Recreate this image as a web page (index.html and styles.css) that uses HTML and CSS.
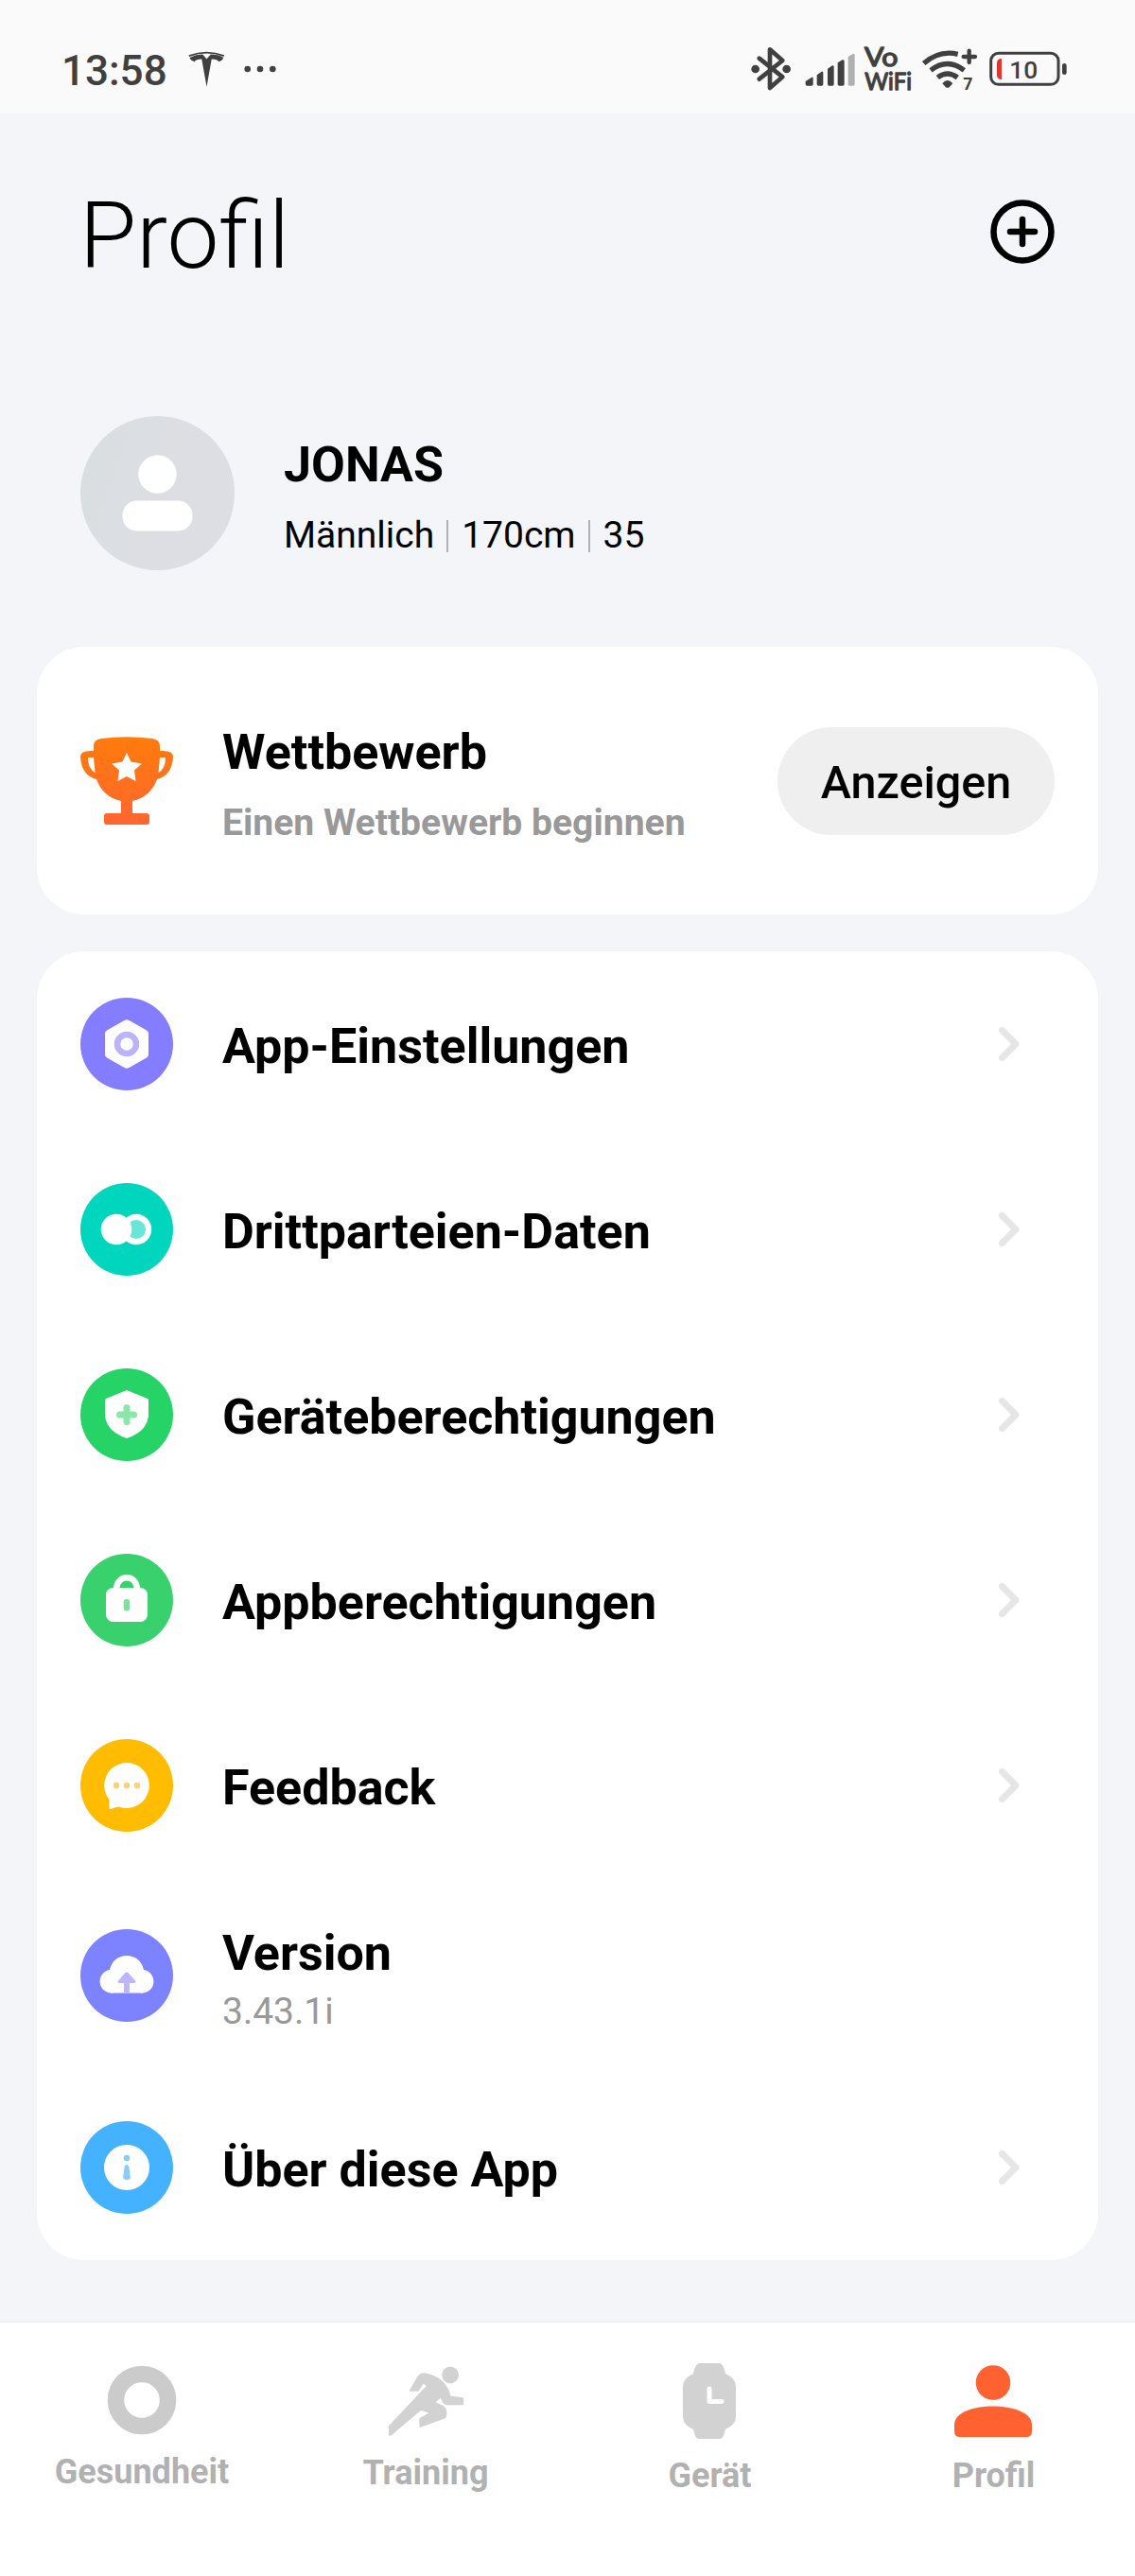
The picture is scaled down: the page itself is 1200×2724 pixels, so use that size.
FILE: index.html
```html
<!DOCTYPE html>
<html lang="de">
<head>
<meta charset="utf-8">
<title>Profil</title>
<link rel="stylesheet" href="styles.css">
</head>
<body>
<div class="status">
  <div class="status-left">
    <span class="time">13:58</span>
    <svg class="tesla" viewBox="476 70 118 116"><path d="M477 83Q535 61 592 83L590 88Q535 68 479 88Z"/><path d="M480 91Q500 81 522 81L535 96L548 81Q570 81 589 91Q586 101 574 104Q570 97 551 96L535 185L519 96Q500 97 496 104Q484 101 480 91Z"/></svg>
    <svg class="dots" viewBox="0 0 34 8"><circle cx="3.700" cy="4" r="3.300"/><circle cx="17" cy="4" r="3.300"/><circle cx="30.300" cy="4" r="3.300"/></svg>
  </div>
  <div class="status-right">
    <svg width="50" height="90" viewBox="40 0 150 270"><path class="line" stroke-width="14" d="M69 95L143 154L103 189V67L143 102L69 161"/><circle cx="57" cy="129" r="13"/><circle cx="156" cy="129" r="13"/></svg>
    <svg width="66.67" height="90" viewBox="190 0 200 270"><path d="M216 168L236 155Q240 154 240 159V177Q240 182 235 182H221Q216 182 216 177ZM252 148L267 137Q272 135 272 141V177Q272 182 267 182H257Q252 182 252 177ZM286 128L301 118Q306 116 306 122V177Q306 182 301 182H291Q286 182 286 177ZM318 109L333 100Q339 98 339 104V177Q339 182 334 182H323Q318 182 318 177Z"/><path class="faint" d="M351 90L366 81Q372 79 372 85V177Q372 182 367 182H356Q351 182 351 177Z"/></svg>
    <svg class="vowifi" width="60" height="90" viewBox="390 0 180 270"><text x="402" y="120" font-size="78" textLength="106" lengthAdjust="spacingAndGlyphs">Vo</text><text x="403" y="195" font-size="76" textLength="149" lengthAdjust="spacingAndGlyphs">WiFi</text></svg>
    <svg width="70" height="90" viewBox="570 0 210 270"><path class="arc" d="M590 111Q640 68 698 82M612 133Q665 92 718 133M634 156Q665 132 697 156"/><path d="M649 175Q665 155 682 175L671 187Q665 190 660 187Z"/><path class="line" stroke-width="13" d="M716 90H753M734 71V108"/><text class="seven" x="715" y="195">7</text></svg>
    <svg width="100" height="90" viewBox="780 0 300 270"><rect class="line" x="803" y="79" width="214" height="99" rx="24" stroke-width="9"/><path d="M1029 119Q1029 111 1036 111Q1043 111 1043 119V139Q1043 147 1036 147Q1029 147 1029 139Z"/><path class="low" d="M822 110Q822 96 837 96V162Q822 162 822 148Z"/><text class="level" x="862" y="159">10</text></svg>
  </div>
</div>

<header class="head">
  <h1>Profil</h1>
  <svg class="plus" viewBox="0 0 68 68"><circle cx="34" cy="34" r="30.500"/><path d="M34 21V47M21 34H47"/></svg>
</header>

<section class="user">
  <svg class="avatar" viewBox="0 0 163 163"><defs><linearGradient id="av" x1="0" y1=".3" x2=".6" y2=".5"><stop offset="0" stop-color="#d9dee1"/><stop offset="1" stop-color="#dddee3"/></linearGradient></defs><circle cx="81.500" cy="81.500" r="81.500" fill="url(#av)"/><circle cx="81.500" cy="61.500" r="20.300" fill="#fff"/><rect x="44.500" y="89.500" width="74" height="32" rx="15" fill="#fff"/></svg>
  <div class="user-text">
    <div class="name">JONAS</div>
    <div class="facts"><span>Männlich</span><i></i><span>170cm</span><i></i><span>35</span></div>
  </div>
</section>

<section class="card contest">
  <svg class="trophy" viewBox="0 0 98 93"><defs><linearGradient id="tr" x1="0" y1="0" x2="0" y2="1"><stop offset="0" stop-color="#ff7c0c"/><stop offset="1" stop-color="#ff6630"/></linearGradient></defs><path fill="url(#tr)" fill-rule="evenodd" d="M14 10Q14 3 22 2Q49-1.500 76 2Q84 3 84 10V15Q98 14 98 21Q97 41 81 45Q74 64 55 68V81H70Q73 81 73 84V90Q73 93 70 93H28Q25 93 25 90V84Q25 81 28 81H43V68Q24 64 17 45Q1 41 0 21Q0 14 14 15ZM14 22H8Q8 34 15.500 38ZM84 22L82.500 38Q90 34 90 22ZM49 17L44.500 26.500L33 28.500L41 35.500L39.500 47L49 42L58.500 47L57 35.500L65 28.500L53.500 26.500Z"/></svg>
  <div class="contest-text">
    <div class="label">Wettbewerb</div>
    <div class="sub">Einen Wettbewerb beginnen</div>
  </div>
  <button class="show">Anzeigen</button>
</section>

<section class="card list">
  <div class="row">
    <svg class="icon" viewBox="0 0 98 98"><circle cx="49" cy="49" r="49" fill="#857dff"/><path fill="#fff" d="M46.500 24Q49 22.500 51.500 24L70 34.500Q72 35.700 72 38V60Q72 62.300 70 63.500L51.500 74Q49 75.500 46.500 74L28 63.500Q26 62.300 26 60V38Q26 35.700 28 34.500Z"/><circle cx="49" cy="49" r="10" fill="none" stroke="#bdb3fa" stroke-width="6.500"/></svg>
    <span class="label">App-Einstellungen</span>
    <svg class="chev" viewBox="0 0 22 36"><path d="M3.500 3.500L18 18L3.500 32.500"/></svg>
  </div>
  <div class="row">
    <svg class="icon" viewBox="0 0 98 98"><circle cx="49" cy="49" r="49" fill="#00d6bd"/><circle cx="59" cy="49" r="16.200" fill="#fff"/><circle cx="59" cy="49" r="10" fill="#68e6d8"/><circle cx="38" cy="49" r="16.300" fill="#fff"/></svg>
    <span class="label">Drittparteien-Daten</span>
    <svg class="chev" viewBox="0 0 22 36"><path d="M3.500 3.500L18 18L3.500 32.500"/></svg>
  </div>
  <div class="row">
    <svg class="icon" viewBox="0 0 98 98"><circle cx="49" cy="49" r="49" fill="#26d366"/><path fill="#fff" d="M49 23L71 32Q72 32.500 72 34V48Q72 66 49 74Q26 66 26 48V34Q26 32.500 27 32Z"/><path class="cross" d="M41.500 49H56.500M49 41.500V56.500"/></svg>
    <span class="label">Geräteberechtigungen</span>
    <svg class="chev" viewBox="0 0 22 36"><path d="M3.500 3.500L18 18L3.500 32.500"/></svg>
  </div>
  <div class="row">
    <svg class="icon" viewBox="0 0 98 98"><circle cx="49" cy="49" r="49" fill="#39d16e"/><path fill="none" stroke="#fff" stroke-width="6.500" d="M38 38C38 21 60 21 60 38"/><rect x="27" y="36" width="44" height="36" rx="7.500" fill="#fff"/><rect x="45.700" y="48" width="6.600" height="12.500" rx="3.300" fill="#7ee09f"/></svg>
    <span class="label">Appberechtigungen</span>
    <svg class="chev" viewBox="0 0 22 36"><path d="M3.500 3.500L18 18L3.500 32.500"/></svg>
  </div>
  <div class="row">
    <svg class="icon" viewBox="0 0 98 98"><circle cx="49" cy="49" r="49" fill="#ffbc00"/><path fill="#fff" d="M49 25A24 24 0 1 1 40.500 71.500Q35 72.500 32 74Q30.500 74.500 30.500 73V64A24 24 0 0 1 49 25Z"/><g fill="#fdd077"><circle cx="38" cy="49" r="3.200"/><circle cx="49" cy="49" r="3.200"/><circle cx="60" cy="49" r="3.200"/></g></svg>
    <span class="label">Feedback</span>
    <svg class="chev" viewBox="0 0 22 36"><path d="M3.500 3.500L18 18L3.500 32.500"/></svg>
  </div>
  <div class="row version">
    <svg class="icon" viewBox="0 0 98 98"><circle cx="49" cy="49" r="49" fill="#7d82ff"/><path fill="#fff" d="M31 43C35 23 63 23 67 43A12.400 12.400 0 0 1 63 67.500H35A12.400 12.400 0 0 1 31 43Z"/><path fill="#bcb6fb" d="M47.500 46Q49 44.800 50.500 46L58 54.500Q59 57 57 57H52V67.500H46V57H41Q39 57 40 54.500Z"/></svg>
    <div class="version-text"><span class="label">Version</span><span class="num">3.43.1i</span></div>
  </div>
  <div class="row">
    <svg class="icon" viewBox="0 0 98 98"><circle cx="49" cy="49" r="49" fill="#45b2ff"/><circle cx="49" cy="49" r="24" fill="#fff"/><circle cx="49" cy="39" r="3.300" fill="#8acdf8"/><path fill="#8acdf8" d="M46.500 48.500Q47 46 49 46Q51 46 51.500 48.500L52.800 59Q53 62 49 62Q45 62 45.200 59Z"/></svg>
    <span class="label">Über diese App</span>
    <svg class="chev" viewBox="0 0 22 36"><path d="M3.500 3.500L18 18L3.500 32.500"/></svg>
  </div>
</section>

<nav class="tabs">
  <div class="tab t1"><svg width="84" height="84" viewBox="0 0 84 84"><circle cx="42" cy="42" r="27.500" fill="none" stroke="#cbcbcb" stroke-width="17.500"/></svg><span>Gesundheit</span></div>
  <div class="tab t2"><svg width="84" height="84" viewBox="0 0 84 84"><g transform="translate(3 5.500) scale(.3444 .3333) translate(-1106 -188)" fill="#d2d2d2"><ellipse cx="1295" cy="215" rx="26" ry="27"/><path d="M1170 263L1194 220Q1203 206 1220 209Q1282 222 1296 281L1332 286Q1336 287 1336 291V306Q1336 310 1332 310H1283Q1272 308 1265 288L1250 301L1275 313Q1287 322 1283 346Q1282 350 1277 353L1206 380Q1200 383 1200 376V352L1229 335L1205 327L1114 406Q1106 411 1106 403V376L1221 250L1213 242L1197 267H1173Q1169 267 1170 263Z"/></g></svg><span>Training</span></div>
  <div class="tab t3"><svg width="84" height="84" viewBox="0 0 84 84"><path fill="#d2d2d2" d="M31 2H53Q57 3 59 13Q70 18 70 27V59Q70 67 59 72Q57 82 53 82H31Q27 82 25 72Q14 67 14 59V27Q14 18 25 13Q27 3 31 2Z"/><path class="hand" d="M42 29V42.500H55"/></svg><span>Gerät</span></div>
  <div class="tab t4"><svg width="84" height="84" viewBox="0 0 84 84"><g fill="#ff6230"><circle cx="42" cy="22.500" r="18.300"/><path d="M1 67C1 41 83 41 83 67V74Q83 80 77 80H7Q1 80 1 74Z"/></g></svg><span>Profil</span></div>
</nav>
</body>
</html>
```
FILE: styles.css
```css
* { box-sizing: border-box; }
body {
  margin: 0;
  width: 1200px;
  height: 2724px;
  background: #f3f5f9;
  color: #000;
  font-family: Roboto, sans-serif;
  display: flex;
  flex-direction: column;
  overflow: hidden;
}
svg { display: block; flex: none; }

.status {
  height: 120px;
  background: #fafafa;
  color: #404040;
  fill: #404040;
  display: flex;
  justify-content: space-between;
  padding: 30px 60px 0 65px;
}
.status-left, .status-right { display: flex; height: 90px; }
.time { font-size: 44px; font-weight: 500; line-height: 90px; width: 134px; }
.tesla { width: 39px; height: 38px; margin-top: 24px; }
.dots { width: 34px; height: 8px; margin: 39px 0 0 20px; }
.line, .arc { fill: none; stroke: #404040; stroke-linecap: round; stroke-linejoin: round; }
.arc { stroke-width: 16px; stroke-linecap: butt; }
.faint { fill: #b0b0b0; }
.low { fill: #e3342f; }
.vowifi { font-family: Lato, sans-serif; font-weight: 400; stroke: #404040; stroke-width: 4px; stroke-linejoin: round; }
.seven { font-size: 53px; font-weight: 700; }
.level { font-size: 79px; font-weight: 500; }

.head {
  height: 254px;
  display: flex;
  justify-content: space-between;
  padding: 91px 85px 0 84px;
}
h1 { margin: 0; padding-top: 2px; font-weight: 300; font-size: 98px; line-height: 74px; }
.plus { width: 68px; height: 68px; }
.plus * { fill: none; stroke: #000; stroke-width: 6.5px; stroke-linecap: round; }

.user {
  height: 310px;
  padding: 66px 85px 0;
  display: flex;
  gap: 52px;
}
.avatar { width: 163px; height: 163px; }
.name { font-size: 52px; font-weight: 700; line-height: 60px; margin-top: 22px; }
.facts { display: flex; align-items: center; font-size: 39px; line-height: 46px; margin-top: 21px; }
.facts i { width: 2px; height: 34px; background: #b0b1b4; margin: 2px 14px 0 13px; }

.card {
  margin: 0 39px;
  background: #fff;
  border-radius: 50px;
}
.contest {
  height: 283px;
  padding: 0 46px;
  display: flex;
  align-items: center;
}
.trophy { width: 98px; height: 93px; }
.contest-text { flex: 1; margin-left: 52px; padding-top: 7px; }
.label { font-size: 52px; font-weight: 700; line-height: 60px; }
.sub { font-size: 39.1px; font-weight: 700; line-height: 46px; margin-top: 21px; color: #999; }
.show {
  width: 293px;
  height: 114px;
  border: 0;
  border-radius: 57px;
  background: #efefef;
  font: 500 48.5px/56px Roboto, sans-serif;
  color: #000;
  padding: 4px 0 0;
}
.list { margin-top: 39px; height: 1384px; }
.row {
  height: 196px;
  display: flex;
  align-items: center;
  padding: 0 83px 0 46px;
}
.icon { width: 98px; height: 98px; margin-right: 52px; }
.row > .label { flex: 1; padding-top: 5px; }
.chev { width: 22px; height: 36px; }
.chev path { fill: none; stroke: #e6e6e6; stroke-width: 7px; stroke-linecap: round; stroke-linejoin: round; }
.cross { stroke: #8be6a9; stroke-width: 7px; stroke-linecap: round; }
.version { height: 208px; padding-bottom: 2px; }
.version-text { display: flex; flex-direction: column; gap: 8px; padding-top: 7px; }
.num { font-size: 39px; line-height: 46px; color: #999; }

.tabs {
  margin-top: auto;
  height: 269px;
  background: #fff;
  border-top: 1px solid #ededf0;
  display: flex;
}
.tab {
  flex: 1;
  display: flex;
  flex-direction: column;
  align-items: center;
  padding-top: 41px;
  color: #b1b1b1;
  font-size: 36px;
  font-weight: 700;
  line-height: 42px;
}
.t1 { padding-top: 40px; }
.t1 span { margin-top: 13px; }
.t2 span { margin-top: 13px; }
.t3 span, .t4 span { margin-top: 16px; padding-left: 1px; }
.hand { fill: none; stroke: #fff; stroke-width: 5px; stroke-linecap: round; stroke-linejoin: round; }
```
